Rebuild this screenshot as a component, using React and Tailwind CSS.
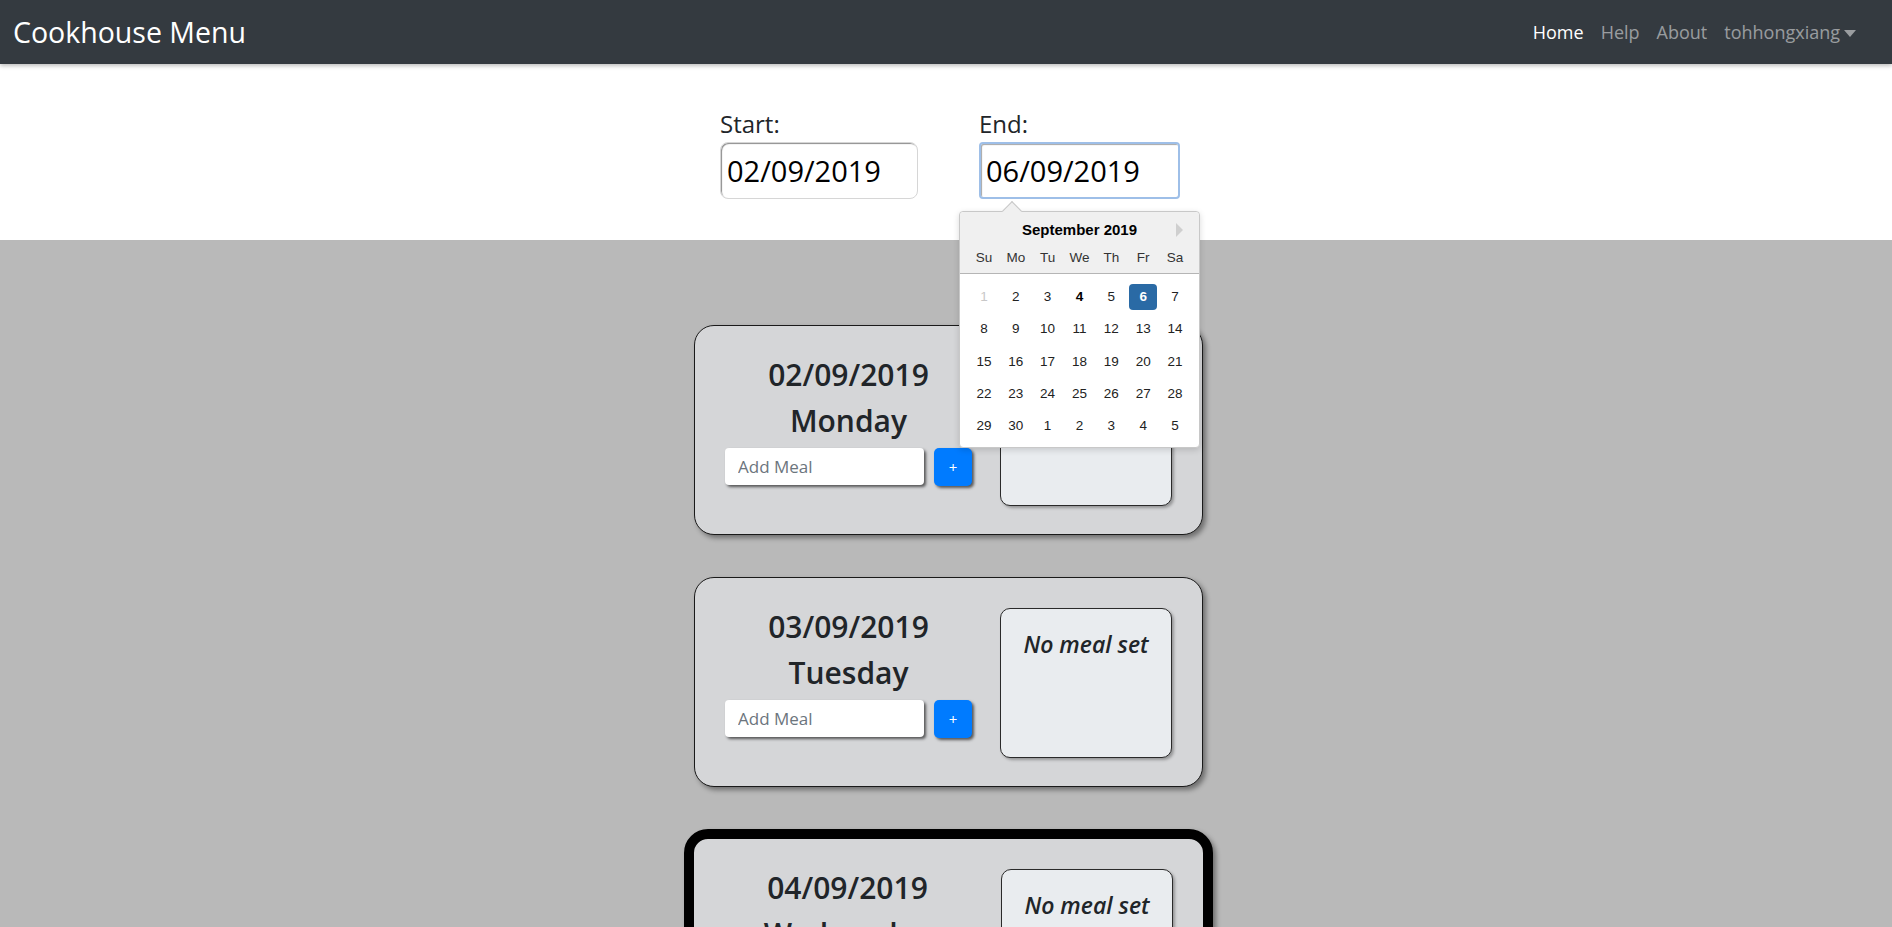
import { useState } from "react";

/**
 * Cookhouse menu planner: date range picker + one card per day.
 */
const FONT = { fontFamily: '"Open Sans", "Noto Sans", sans-serif' };
const CAL_FONT = { fontFamily: '"Liberation Sans", Arial, sans-serif' };

const days = [
  { date: "02/09/2019", name: "Monday", meal: null },
  { date: "03/09/2019", name: "Tuesday", meal: "No meal set" },
  { date: "04/09/2019", name: "Wednesday", meal: "No meal set", today: true },
];

/* september 2019 grid */
const weeks = [
  [1, 2, 3, 4, 5, 6, 7],
  [8, 9, 10, 11, 12, 13, 14],
  [15, 16, 17, 18, 19, 20, 21],
  [22, 23, 24, 25, 26, 27, 28],
  [29, 30, 1, 2, 3, 4, 5],
];

function Navbar() {
  return (
    <nav className="h-[64px] bg-[#343a40] flex items-center justify-between pl-[13px] pr-[36px] shadow-[0_2px_4px_rgba(0,0,0,0.25)] relative z-10">
      <span className="text-white text-[28.5px] leading-none">Cookhouse Menu</span>
      <div className="flex items-center gap-[17px] text-[18px]">
        <span className="text-white">Home</span>
        <span className="text-white/50">Help</span>
        <span className="text-white/50">About</span>
        <span className="text-white/50 flex items-center gap-[4px]">
          tohhongxiang
          <span className="inline-block w-0 h-0 border-l-[6px] border-r-[6px] border-t-[7px] border-l-transparent border-r-transparent border-t-white/50 mt-[2px]" />
        </span>
      </div>
    </nav>
  );
}

function Calendar() {
  return (
    <div
      className="absolute left-[-20px] top-[102px] w-[241px] h-[237px] bg-white border border-[#c8c8c8] rounded-[4px] shadow-[0_2px_6px_rgba(0,0,0,0.15)] z-20"
      style={CAL_FONT}
    >
      {/* arrow */}
      <div className="absolute left-[45px] top-[-8px] w-[14px] h-[14px] rotate-45 bg-[#f0f0f0] border-l border-t border-[#c8c8c8]" />
      <div className="relative bg-[#f0f0f0] rounded-t-[4px] border-b border-[#b5b5b5] h-[62px]">
        <div className="h-[36px] flex items-center justify-center text-[15px] font-bold text-black">
          September 2019
        </div>
        <div className="absolute right-[16px] top-[11px] w-0 h-0 border-t-[7px] border-b-[7px] border-l-[7px] border-t-transparent border-b-transparent border-l-[#cfcfcf]" />
        <div className="grid grid-cols-7 px-[8px] h-[20px] items-center text-[13.5px] text-[#333] text-center">
          {["Su", "Mo", "Tu", "We", "Th", "Fr", "Sa"].map((d) => (
            <span key={d}>{d}</span>
          ))}
        </div>
      </div>
      <div className="px-[8px] pt-[7px]">
        {weeks.map((w, wi) => (
          <div key={wi} className="grid grid-cols-7 h-[32.25px] items-center text-center text-[13.5px] text-[#222]">
            {w.map((n, i) => {
              const muted = wi === 0 && n === 1;
              const sel = wi === 0 && n === 6;
              const today = wi === 0 && n === 4;
              return (
                <div key={i} className="flex justify-center">
                  <span
                    className={`w-[28px] h-[26px] flex items-center justify-center rounded-[4px]
                      ${sel ? "bg-[#2a6aa5] text-white font-bold" : ""}
                      ${muted ? "text-[#c8c8c8]" : ""}
                      ${today ? "font-bold text-black" : ""}`}
                  >
                    {n}
                  </span>
                </div>
              );
            })}
          </div>
        ))}
      </div>
    </div>
  );
}

function DateRange() {
  return (
    <section className="h-[176px] bg-white flex justify-center gap-[61px] pt-[45px] pl-[8px]">
      <div className="flex flex-col">
        <label className="text-[24px] leading-[30px] text-[#212529]">Start:</label>
        <div className="mt-[3px] w-[198px] h-[57px] rounded-[8px] border border-[#d6d6d6] shadow-[inset_1px_1px_1px_rgba(0,0,0,0.45)] flex items-center pl-[6px] text-[29px] text-black">
          02/09/2019
        </div>
      </div>
      <div className="flex flex-col relative">
        <label className="text-[24px] leading-[30px] text-[#212529]">End:</label>
        <div className="mt-[3px] w-[201px] h-[57px] rounded-[4px] border-2 border-[#9ebfe8] shadow-[inset_1px_1px_1px_rgba(0,0,0,0.35)] flex items-center pl-[5px] text-[29px] text-black">
          06/09/2019
        </div>
        <Calendar />
      </div>
    </section>
  );
}

function DayCard({ day }) {
  return (
    <div
      className={`flex rounded-[20px] bg-[#d5d6d8] shadow-[3px_3px_5px_rgba(0,0,0,0.4)] p-[30px]
        ${day.today ? "w-[529px] h-[230px] border-[10px] border-black rounded-[24px]" : "w-[509px] h-[210px] border border-[#1a1a1a]"}`}
    >
      <div className="w-[247px] flex flex-col items-center text-[#212529]">
        <div className="text-[30px] leading-[38px] font-semibold">{day.date}</div>
        <div className="mt-[8px] text-[30px] leading-[38px] font-semibold">{day.name}</div>
        <div className="mt-[8px] flex gap-[10px] w-full">
          <input
            placeholder="Add Meal"
            className="w-[199px] h-[37px] bg-white rounded-[4px] pl-[13px] text-[17px] placeholder:text-[#6c757d] shadow-[2px_2px_3px_rgba(0,0,0,0.6)] outline-none"
          />
          <button className="w-[38px] h-[38px] bg-[#007bff] text-white rounded-[5px] text-[15px] shadow-[2px_2px_3px_rgba(0,0,0,0.6)]">
            +
          </button>
        </div>
      </div>
      <div className="ml-auto w-[172px] h-[150px] rounded-[10px] border border-[#2a2a2a] bg-[#e9ecef] shadow-[2px_2px_3px_rgba(0,0,0,0.3)] pt-[17px] text-center">
        {day.meal && (
          <span className="italic text-[23px] leading-[36px] font-semibold text-[#212529]">{day.meal}</span>
        )}
      </div>
    </div>
  );
}

export default function App() {
  const [list] = useState(days);
  return (
    <div className="min-h-screen bg-[#b9b9b9]" style={FONT}>
      <Navbar />
      <DateRange />
      <main className="flex flex-col items-center gap-[42px] pt-[85px] pb-[60px] pl-[5px]">
        {list.map((d) => (
          <DayCard key={d.date} day={d} />
        ))}
      </main>
    </div>
  );
}
